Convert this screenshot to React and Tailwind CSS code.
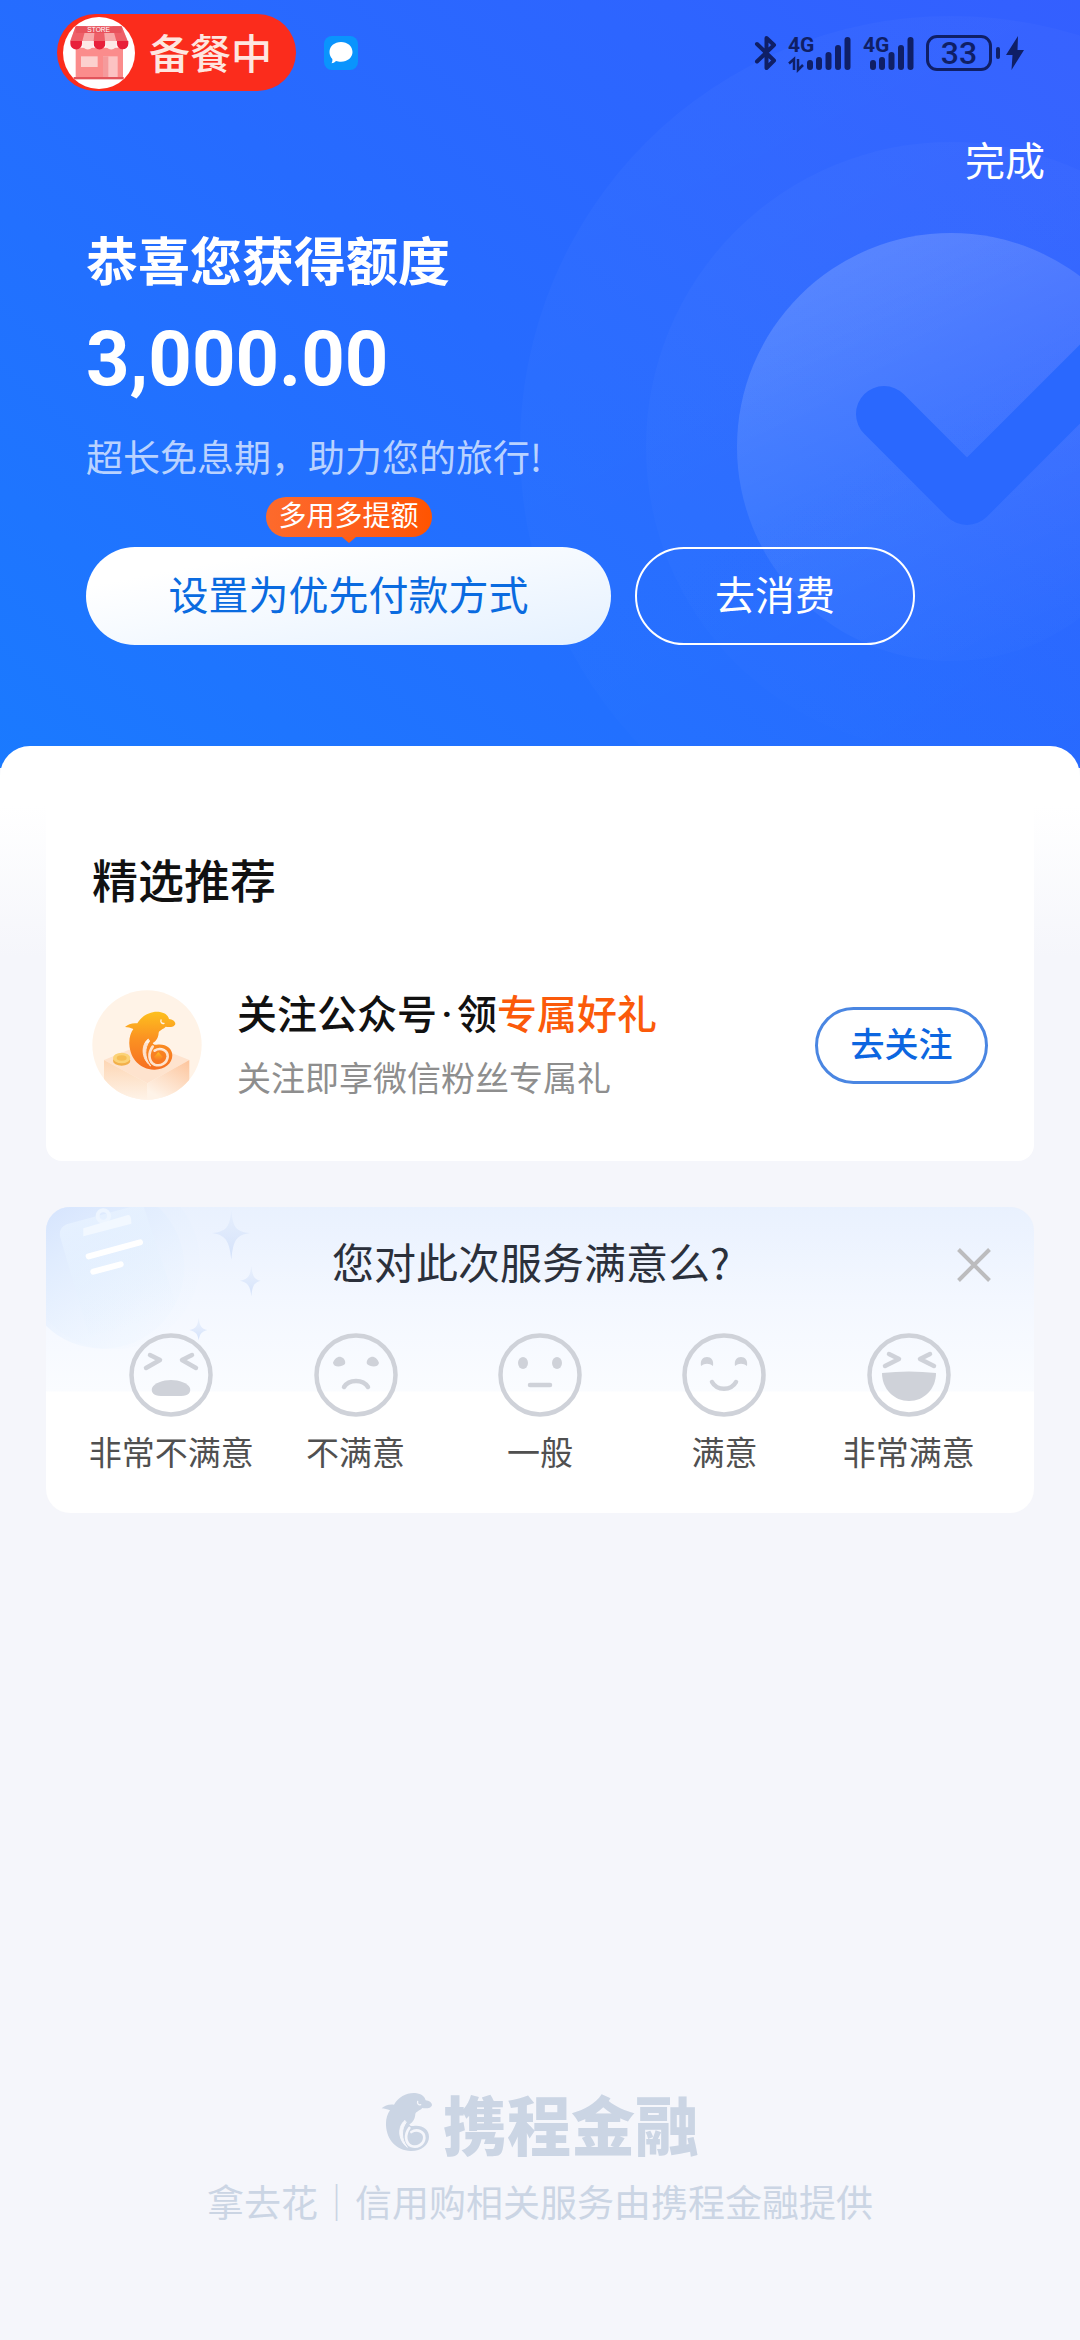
import React, { useId } from "react";

const FACE_COLOR = "#cfd2d9";

function Backdrop() {
  return (
    <svg
      className="absolute top-0 right-0 h-[768px] w-[580px]"
      viewBox="500 0 580 768"
      fill="none"
      aria-hidden="true"
    >
      <defs>
        <linearGradient id="halo" x1="0" y1="0" x2="0.6" y2="1">
          <stop offset="0" stopColor="#fff" stopOpacity="0.03" />
          <stop offset="1" stopColor="#fff" stopOpacity="0" />
        </linearGradient>
        <linearGradient id="disc" x1="0.2" y1="0.1" x2="0.6" y2="1">
          <stop offset="0" stopColor="#fff" stopOpacity="0.17" />
          <stop offset="0.5" stopColor="#fff" stopOpacity="0.07" />
          <stop offset="1" stopColor="#fff" stopOpacity="0.01" />
        </linearGradient>
      </defs>
      <circle cx="951" cy="447" r="431" fill="url(#halo)" />
      <circle cx="951" cy="447" r="305" fill="url(#halo)" />
      <circle cx="951" cy="447" r="214" fill="url(#disc)" />
      <path
        d="M884 414 L967 497 L1110 354"
        stroke="#2a68fe"
        strokeWidth="56"
        strokeLinecap="round"
        strokeLinejoin="round"
      />
    </svg>
  );
}

function StoreLogo() {
  return (
    <svg className="size-[72px]" viewBox="0 0 216 216" aria-hidden="true">
      <circle cx="108" cy="108" r="108" fill="#fff" />
      <rect x="38" y="92" width="142" height="94" fill="#fb8c8c" />
      <rect x="32" y="180" width="150" height="7" fill="#e2545c" />
      <rect x="54" y="118" width="50" height="32" fill="#fcd0cf" />
      <rect x="120" y="118" width="44" height="62" fill="#fcc3c3" />
      <rect x="120" y="118" width="16" height="62" fill="#f59a9c" />
      <path d="M38 28 H176 L194 72 H22 Z" fill="#f8a9ab" />
      <path d="M38 28 H70 L58 72 H22 Z" fill="#ee5f68" />
      <path d="M96 28 H122 L126 72 H92 Z" fill="#ee5f68" />
      <path d="M148 28 H176 L194 72 H160 Z" fill="#ee5f68" />
      <rect x="38" y="28" width="138" height="20" rx="4" fill="#e8525c" />
      <path d="M22 72 h35 v8 a17 17 0 0 1 -35 0z M92 72 h35 v8 a17 17 0 0 1 -35 0z M162 72 h34 v8 a17 17 0 0 1 -34 0z" fill="#e8203a" />
      <path d="M57 72 h35 v8 a17 17 0 0 1 -35 0z M127 72 h35 v8 a17 17 0 0 1 -35 0z" fill="#fde9e7" />
      <text x="107" y="45" textAnchor="middle" fontSize="20" fill="#fff" fontFamily="Liberation Sans">
        STORE
      </text>
    </svg>
  );
}

function MessageIcon() {
  return (
    <svg className="size-[34px]" viewBox="0 0 34 34" aria-hidden="true">
      <rect width="34" height="34" rx="8" fill="#0a94fd" />
      <path
        d="M17 6 C23.5 6 28.5 10.300 28.500 16 C28.500 21.500 23.500 25.700 17 25.700 C15 25.700 13.500 25.500 12 25 C10.500 26.500 9 27.200 7.500 27.200 C8.300 26 8.600 24.500 8.300 23 C6.500 21.200 5.500 18.800 5.500 16 C5.500 10.300 10.500 6 17 6z"
        fill="#fff"
      />
    </svg>
  );
}

function BluetoothIcon() {
  return (
    <svg className="h-9 w-6" viewBox="0 0 24 36" fill="none" stroke="currentColor" strokeWidth="4" strokeLinejoin="round" strokeLinecap="round" aria-hidden="true">
      <path d="M3 9 L20 25.500 L12.500 33 V3 L20 10 L3 26.500" />
    </svg>
  );
}

function Signal({ arrows }) {
  return (
    <svg
      className={arrows ? "h-9 w-[63px] overflow-visible" : "h-9 w-[51px] overflow-visible"}
      viewBox={arrows ? "0 0 63 36" : "12 0 51 36"}
      aria-hidden="true"
    >
      <text
        x={arrows ? 0 : 12}
        y="17"
        fontSize="21"
        fontWeight="700"
        fill="currentColor"
        fontFamily="Roboto"
      >
        4G
      </text>
      {arrows && (
        <path
          d="M1 28.500 L6 24 V35 M10 24 V35 L15 30"
          fill="none"
          stroke="currentColor"
          strokeWidth="2.500"
        />
      )}
      <g stroke="currentColor" strokeWidth="6" strokeLinecap="round">
        <path d="M22 28 V32" />
        <path d="M31 25 V32" />
        <path d="M40.500 20 V32" />
        <path d="M50 13 V32" />
        <path d="M59.500 5 V32" />
      </g>
    </svg>
  );
}

function Battery() {
  return (
    <div className="flex items-center gap-1">
      <span className="flex h-9 w-[66px] items-center justify-center rounded-[11px] border-3 border-current font-[Roboto] text-[32px] leading-8 font-medium">
        33
      </span>
      <span className="h-3 w-1 rounded-full bg-current" />
    </div>
  );
}

function Bolt() {
  return (
    <svg className="h-9 w-[18px]" viewBox="0 0 18 36" fill="currentColor" aria-hidden="true">
      <path d="M12 1 L0 20 H6.500 L5.500 35 L18 15 H11.500 Z" />
    </svg>
  );
}

function Dolphin({ fill, transform }) {
  const id = useId();
  return (
    <g transform={transform}>
      <mask id={id} maskUnits="userSpaceOnUse" x="30" y="20" width="160" height="190">
        <rect x="30" y="20" width="160" height="190" fill="#fff" />
        <g fill="none" stroke="#000" strokeLinecap="round">
          <path d="M104 112 C84 128 82 168 112 192 C92 166 94 136 108 118 Z" fill="#000" strokeWidth="3" />
          <path d="M124 146 C142 134 164 146 163 164 C161 184 142 194 124 188 C106 180 103 154 118 134" strokeWidth="8" />
          <path d="M143 54 C141 61 146 66 152 64" strokeWidth="4" />
        </g>
      </mask>
      <g mask={`url(#${id})`}>
        <path
          d="M35 75 C44 66 58 62 72 64 C86 40 114 26 140 30 C157 33 165 42 167 51 C177 52 186 58 186 65 C184 76 166 76 157 74 C150 82 138 84 136 92 C135 106 130 116 118 123 C120 128 124 129 130 128 C156 124 177 138 177 160 C177 186 152 204 122 203 C80 202 50 170 48 126 C47 108 52 92 60 81 C52 77 43 76 35 75z"
          fill={fill}
        />
      </g>
      <path d="M135 150 L148 165 L135 180 L122 165z" fill={fill} />
    </g>
  );
}

function GiftBadge() {
  return (
    <svg className="size-[110px] shrink-0" viewBox="0 0 330 330" aria-hidden="true">
      <defs>
        <clipPath id="badge-clip">
          <circle cx="165" cy="165" r="164" />
        </clipPath>
        <linearGradient id="dolphin-fill" x1="0" y1="0" x2="0" y2="1">
          <stop offset="0" stopColor="#fdc01e" />
          <stop offset="0.45" stopColor="#fb9322" />
          <stop offset="1" stopColor="#f66f22" />
        </linearGradient>
        <linearGradient id="box-left" x1="0" y1="0" x2="0" y2="1">
          <stop offset="0" stopColor="#fdd6b4" />
          <stop offset="1" stopColor="#fef3e8" />
        </linearGradient>
        <linearGradient id="box-right" x1="1" y1="0" x2="0.4" y2="1">
          <stop offset="0" stopColor="#fdc49b" />
          <stop offset="1" stopColor="#fef3e8" />
        </linearGradient>
      </defs>
      <g clipPath="url(#badge-clip)">
        <rect width="330" height="330" fill="#fff3e7" />
        <path d="M36 210 L162 158 L292 210 L166 280z" fill="#fee3ce" />
        <path d="M36 210 L166 280 V330 H36z" fill="url(#box-left)" />
        <path d="M292 210 L166 280 V330 H292z" fill="url(#box-right)" />
        <ellipse cx="89" cy="212" rx="26" ry="15" fill="#f2b04a" />
        <ellipse cx="89" cy="204" rx="26" ry="16" fill="#fbd277" />
        <ellipse cx="89" cy="204" rx="15" ry="8" fill="#f6bd55" />
        <Dolphin fill="url(#dolphin-fill)" transform="translate(64 36)" />
      </g>
    </svg>
  );
}

function SurveyArt() {
  return (
    <svg
      className="absolute top-0 left-0 h-[184px] w-[240px]"
      viewBox="0 0 720 552"
      aria-hidden="true"
    >
      <defs>
        <linearGradient id="bubble" x1="0" y1="0" x2="0.7" y2="1">
          <stop offset="0" stopColor="#cfdffd" />
          <stop offset="0.4" stopColor="#e0ecfe" />
          <stop offset="1" stopColor="#f0f7ff" stopOpacity="0.4" />
        </linearGradient>
        <linearGradient id="board" x1="0" y1="0" x2="0.4" y2="1">
          <stop offset="0" stopColor="#e8f2ff" />
          <stop offset="1" stopColor="#e3f1ff" stopOpacity="0" />
        </linearGradient>
        <linearGradient id="spark" x1="0" y1="0" x2="0" y2="1">
          <stop offset="0" stopColor="#dde8fb" stopOpacity="0.4" />
          <stop offset="1" stopColor="#d3e1fa" />
        </linearGradient>
      </defs>
      <circle cx="200" cy="165" r="262" fill="url(#bubble)" opacity="0.45" />
      <circle cx="170" cy="180" r="245" fill="url(#bubble)" />
      <path d="M62 52 L290 -10 L400 320 L130 390 L42 88 Q38 62 62 52z" fill="url(#board)" />
      <circle cx="172" cy="27" r="17" fill="none" stroke="#edf5ff" strokeWidth="12" />
      <path d="M112 64 L246 24 Q256 22 256 50 L112 88z" fill="#f2f8ff" />
      <g stroke="#fff" strokeWidth="18" strokeLinecap="round">
        <path d="M128 148 L282 106" />
        <path d="M142 194 L224 172" />
      </g>
      <path d="M556 8 C560 60 570 74 612 78 C570 84 562 100 556 158 C550 100 538 84 498 78 C540 74 552 60 556 8z" fill="url(#spark)" />
      <path d="M616 176 C619 206 624 218 644 221 C624 226 619 238 616 268 C613 238 606 226 582 221 C606 218 613 206 616 176z" fill="url(#spark)" />
      <path d="M458 332 C461 356 466 366 484 369 C466 374 461 382 458 400 C455 382 450 374 430 369 C450 366 455 356 458 332z" fill="url(#spark)" />
    </svg>
  );
}

const faces = [
  {
    label: "非常不满意",
    art: (
      <>
        <path d="M21 22 L31 27 L17 35 M63 22 L53 27 L67 35" />
        <path d="M32 63 C24 63 22 59 23 55 C25 50 34 47 42 47 C50 47 59 50 61 55 C62 59 60 63 52 63z" fill={FACE_COLOR} stroke="none" />
      </>
    ),
  },
  {
    label: "不满意",
    art: (
      <>
        <path d="M19 30 C20 26 24 23 27 24 C30 25 32 28 31 31 C28 34 20 35 19 30z M65 30 C64 26 60 23 57 24 C54 25 52 28 53 31 C56 34 64 35 65 30z" fill={FACE_COLOR} stroke="none" />
        <path d="M30 54 C35 46 49 46 54 54" />
      </>
    ),
  },
  {
    label: "一般",
    art: (
      <>
        <ellipse cx="25" cy="30" rx="5" ry="6" fill={FACE_COLOR} stroke="none" />
        <ellipse cx="59" cy="30" rx="5" ry="6" fill={FACE_COLOR} stroke="none" />
        <path d="M32 52 H52" />
      </>
    ),
  },
  {
    label: "满意",
    art: (
      <>
        <path d="M19 33 C18 27 21 24 25 24 C29 24 32 27 31 33 C27 30 23 30 19 33z M53 33 C52 27 55 24 59 24 C63 24 66 27 65 33 C61 30 57 30 53 33z" fill={FACE_COLOR} stroke="none" />
        <path d="M30 49 C35 58 49 58 54 49" />
      </>
    ),
  },
  {
    label: "非常满意",
    art: (
      <>
        <path d="M22 21 L32 26 L18 33 M63 21 L53 26 L67 33" />
        <path d="M15 40 Q42 37 69 40 C69 56 57 68 42 68 C27 68 15 56 15 40z" fill={FACE_COLOR} stroke="none" />
      </>
    ),
  },
];

function Face({ label, art }) {
  return (
    <button type="button" className="flex flex-1 flex-col items-center gap-4">
      <svg
        className="size-21"
        viewBox="0 0 84 84"
        fill="none"
        stroke={FACE_COLOR}
        strokeWidth="4.500"
        strokeLinecap="round"
        strokeLinejoin="round"
        aria-hidden="true"
      >
        <circle cx="42" cy="42" r="39.500" />
        {art}
      </svg>
      <span className="text-[33px] leading-9 whitespace-nowrap text-[#505050]">{label}</span>
    </button>
  );
}

export default function App() {
  return (
    <div
      lang="zh-CN"
      className="flex min-h-screen flex-col bg-[#f5f6fb] font-['Noto_Sans_CJK_SC',sans-serif]"
    >
      <header className="relative overflow-hidden bg-[linear-gradient(40deg,#1a7aff,#266bff_50%,#345fff)] pt-3.5 pb-[123px] text-white">
        <Backdrop />
        <div className="relative flex items-center justify-between pr-[56px] pl-[57px]">
          <div className="flex items-center gap-7">
            <div className="flex h-[77px] items-center gap-3.5 rounded-full bg-[#fb2c1c] pr-6 pl-1.5">
              <StoreLogo />
              <span className="pb-1 text-[41px] leading-[60px] font-medium text-[#fee6e0]">备餐中</span>
            </div>
            <MessageIcon />
          </div>
          <div className="flex items-center text-[#0f1f66]">
            <BluetoothIcon />
            <div className="ml-2.5 flex gap-3">
              <Signal arrows />
              <Signal />
            </div>
            <div className="ml-3 flex items-center gap-1.5">
              <Battery />
              <Bolt />
            </div>
          </div>
        </div>
        <div className="relative mt-[38px] flex justify-end pr-[35px]">
          <button type="button" className="text-[40px] leading-[60px]">完成</button>
        </div>
        <div className="relative px-[86px]">
          <h1 className="mt-10 text-[52px] leading-[60px] font-bold">恭喜您获得额度</h1>
          <p className="mt-6 font-[Roboto,sans-serif] text-[76px] leading-[92px] font-bold">3,000.00</p>
          <p className="mt-[26px] text-[37px] leading-[50px] text-[#b9d2ff]">
            超长免息期，助力您的旅行!
          </p>
          <div className="mt-[66px] flex gap-6">
            <div className="relative">
              <button
                type="button"
                className="h-[98px] w-[525px] rounded-full bg-linear-to-br from-white from-20% to-[#e5f1ff] pb-1.5 text-[40px] text-[#0a6be0]"
              >
                设置为优先付款方式
              </button>
              <span className="absolute -top-[50px] left-1/2 flex h-10 w-[166px] -translate-x-1/2 items-center justify-center rounded-full bg-linear-to-r from-[#fd6a2c] to-[#ff5400] pb-1.5 text-[28px] leading-9 whitespace-nowrap">
                多用多提额
                <svg className="absolute top-full left-1/2 h-1.5 w-3.5 -translate-x-1/2" viewBox="0 0 14 6" aria-hidden="true">
                  <path d="M0 0 H14 L7 6z" fill="#ff5f16" />
                </svg>
              </span>
            </div>
            <button type="button" className="h-[98px] w-[280px] rounded-full border-2 border-white pb-1.5 text-[40px]">
              去消费
            </button>
          </div>
        </div>
      </header>

      <main className="relative -mt-[22px] rounded-t-[30px] bg-[linear-gradient(#fff_60px,#f5f6fb_210px)] px-[46px]">
        <section className="rounded-b-[16px] bg-white px-[46px] pt-[102px] pb-[61px]">
          <h2 className="text-[46px] leading-[60px] font-medium text-[#111]">精选推荐</h2>
          <div className="mt-[82px] flex h-[110px] items-center">
            <GiftBadge />
            <div className="ml-[35px] flex-1 pb-1.5">
              <h3 className="text-[40px] leading-[50px] font-medium text-[#111]">
                关注公众号
                <span className="inline-block w-5 text-center font-[Roboto]">·</span>
                领<span className="text-[#fb5a0a]">专属好礼</span>
              </h3>
              <p className="mt-4 text-[34px] leading-10 text-[#8e8e8e]">关注即享微信粉丝专属礼</p>
            </div>
            <button
              type="button"
              className="h-[77px] w-[173px] rounded-full border-3 border-[#4a86e2] pb-1.5 text-[34px] font-medium text-[#0c66e0]"
            >
              去关注
            </button>
          </div>
        </section>

        <section className="relative mt-[46px] overflow-hidden rounded-[24px] bg-white bg-[linear-gradient(#e9f1fe,#f3f7ff_90px,#fafcff_184px,#fff_185px)] px-[33px] pt-6 pb-11">
          <SurveyArt />
          <div className="relative flex items-center">
            <h2 className="flex-1 pl-[26px] text-center text-[42px] leading-[60px] text-[#2b303b]">
              您对此次服务满意么?
            </h2>
            <button type="button" aria-label="关闭" className="mt-2 mr-2.5">
              <svg className="size-[34px]" viewBox="0 0 34 34" stroke="#bcbcbe" strokeWidth="4" aria-hidden="true">
                <path d="M1.500 1.500 L32.500 32.500 M32.500 1.500 L1.500 32.500" />
              </svg>
            </button>
          </div>
          <div className="relative mt-[42px] flex">
            {faces.map((face) => (
              <Face key={face.label} {...face} />
            ))}
          </div>
        </section>
      </main>

      <footer className="mt-auto flex flex-col items-center pb-[114px] text-[#cbd5e4]">
        <div className="flex h-[60px] items-center gap-2.5">
          <svg className="h-[60px] w-[52px]" viewBox="34 26 154 180" aria-hidden="true">
            <Dolphin fill="#cbd5e4" />
          </svg>
          <span className="text-[64px] leading-[56px] font-black">携程金融</span>
        </div>
        <p className="mt-6 text-[37px] leading-[50px]">拿去花｜信用购相关服务由携程金融提供</p>
      </footer>
    </div>
  );
}
